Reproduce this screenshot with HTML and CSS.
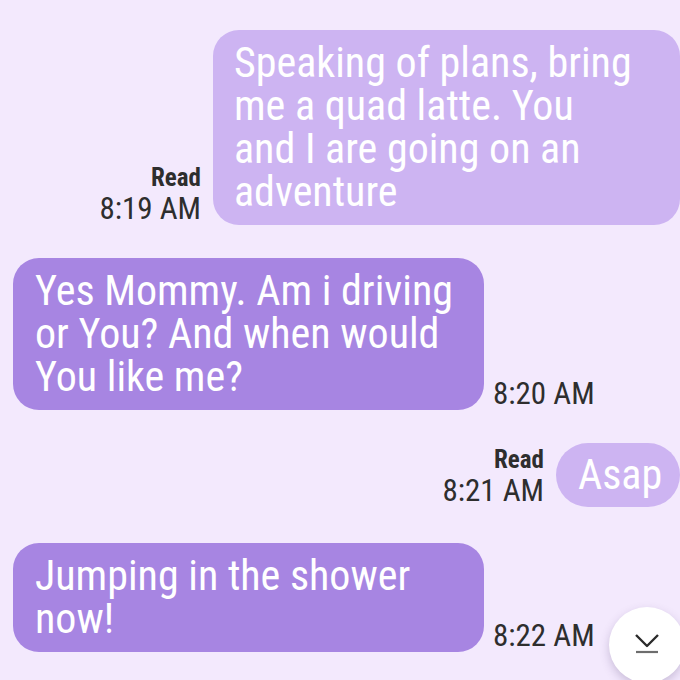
FILE: index.html
```html
<!DOCTYPE html>
<html lang="en">
<head>
  <meta charset="UTF-8">
  <title>Messages</title>
  <link rel="stylesheet" href="styles.css">
</head>
<body>
  <div class="chat">
    <div class="row out">
      <div class="meta">
        <div class="read">Read</div>
        <div class="time">8:19 AM</div>
      </div>
      <div class="bubble sent big">Speaking of plans, bring me a quad latte. You and I are going on an adventure</div>
    </div>

    <div class="row in">
      <div class="bubble recv wide">Yes Mommy. Am i driving or You? And when would You like me?</div>
      <div class="meta">
        <div class="time">8:20 AM</div>
      </div>
    </div>

    <div class="row out">
      <div class="meta">
        <div class="read">Read</div>
        <div class="time">8:21 AM</div>
      </div>
      <div class="bubble sent pill">Asap</div>
    </div>

    <div class="row in last">
      <div class="bubble recv wide">Jumping in the shower now!</div>
      <div class="meta">
        <div class="time">8:22 AM</div>
      </div>
    </div>
  </div>

  <!-- scroll to bottom button -->
  <div class="scroll-down">
    <svg width="28" height="24" viewBox="0 0 28 24">
      <polyline points="3,4 14,15 25,4" fill="none" stroke="#2b2b2b" stroke-width="2.4" stroke-linejoin="round"/>
      <line x1="3" y1="21" x2="25" y2="21" stroke="#6d6d6d" stroke-width="2.2"/>
    </svg>
  </div>
</body>
</html>
```

FILE: styles.css
```css
html, body {
  margin: 0;
  height: 100%;
}

body {
  background: #f3e9fd;
  font-family: Roboto, "Noto Sans", sans-serif;
  font-stretch: 87%;
  overflow: hidden;
  position: relative;
}

.chat {
  display: flex;
  flex-direction: column;
  gap: 33px;
  padding: 30px 0 0 13px;
}

.row {
  display: flex;
  align-items: flex-end;
}

.row.out {
  justify-content: flex-end;
  gap: 12px;
}

.row.in {
  justify-content: flex-start;
  gap: 9px;
}

.row.last {
  margin-top: 3px;
}

.bubble {
  color: #fff;
  font-size: 42px;
  font-weight: 380;
  line-height: 43px;
  padding: 11px 22px 12px 22px;
  border-radius: 26px;
  box-sizing: border-box;
}

.sent {
  background: #cdb4f2;
}

.recv {
  background: #a785e2;
}

.big {
  width: 467px;
  padding-left: 21px;
  padding-right: 44px;
}

.wide {
  width: 471px;
}

.pill {
  width: 124px;
  height: 64px;
  line-height: 64px;
  padding: 0 0 0 22px;
  border-radius: 32px;
}

.meta {
  text-align: right;
  color: #2e2e2e;
}

.read {
  font-size: 25px;
  font-weight: 700;
  line-height: 30px;
}

.time {
  font-size: 31px;
  font-weight: 380;
  line-height: 32px;
}

.scroll-down {
  position: absolute;
  left: 609px;
  top: 607px;
  width: 76px;
  height: 76px;
  border-radius: 50%;
  background: #fff;
  box-shadow: 0 4px 10px rgba(80, 60, 110, 0.25);
  display: flex;
  align-items: center;
  justify-content: center;
}

.scroll-down svg {
  margin: -4px 0 0 -1px;
}
```
